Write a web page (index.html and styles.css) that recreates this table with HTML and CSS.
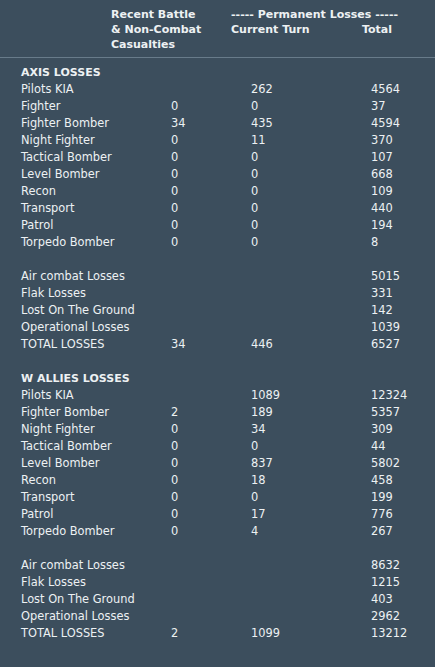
FILE: index.html
```html
<!DOCTYPE html>
<html>
<head>
<meta charset="utf-8">
<link rel="stylesheet" href="styles.css">
</head>
<body>
<div class="page">
  <div class="head">
    <div class="h-recent">Recent Battle<br>&amp; Non-Combat<br>Casualties</div>
    <div class="h-perm">
      <div class="h-perm-title">----- Permanent Losses -----</div>
      <div class="h-perm-sub"><span class="h-current">Current Turn</span><span>Total</span></div>
    </div>
  </div>
  <div class="rule"></div>
  <div class="table">
    <div class="row section"><span>AXIS LOSSES</span></div>
    <div class="row"><span>Pilots KIA</span><span></span><span>262</span><span>4564</span></div>
    <div class="row"><span>Fighter</span><span>0</span><span>0</span><span>37</span></div>
    <div class="row"><span>Fighter Bomber</span><span>34</span><span>435</span><span>4594</span></div>
    <div class="row"><span>Night Fighter</span><span>0</span><span>11</span><span>370</span></div>
    <div class="row"><span>Tactical Bomber</span><span>0</span><span>0</span><span>107</span></div>
    <div class="row"><span>Level Bomber</span><span>0</span><span>0</span><span>668</span></div>
    <div class="row"><span>Recon</span><span>0</span><span>0</span><span>109</span></div>
    <div class="row"><span>Transport</span><span>0</span><span>0</span><span>440</span></div>
    <div class="row"><span>Patrol</span><span>0</span><span>0</span><span>194</span></div>
    <div class="row"><span>Torpedo Bomber</span><span>0</span><span>0</span><span>8</span></div>
    <div class="row blank"></div>
    <div class="row"><span>Air combat Losses</span><span></span><span></span><span>5015</span></div>
    <div class="row"><span>Flak Losses</span><span></span><span></span><span>331</span></div>
    <div class="row"><span>Lost On The Ground</span><span></span><span></span><span>142</span></div>
    <div class="row"><span>Operational Losses</span><span></span><span></span><span>1039</span></div>
    <div class="row"><span>TOTAL LOSSES</span><span>34</span><span>446</span><span>6527</span></div>
    <div class="row blank"></div>
    <div class="row section"><span>W ALLIES LOSSES</span></div>
    <div class="row"><span>Pilots KIA</span><span></span><span>1089</span><span>12324</span></div>
    <div class="row"><span>Fighter Bomber</span><span>2</span><span>189</span><span>5357</span></div>
    <div class="row"><span>Night Fighter</span><span>0</span><span>34</span><span>309</span></div>
    <div class="row"><span>Tactical Bomber</span><span>0</span><span>0</span><span>44</span></div>
    <div class="row"><span>Level Bomber</span><span>0</span><span>837</span><span>5802</span></div>
    <div class="row"><span>Recon</span><span>0</span><span>18</span><span>458</span></div>
    <div class="row"><span>Transport</span><span>0</span><span>0</span><span>199</span></div>
    <div class="row"><span>Patrol</span><span>0</span><span>17</span><span>776</span></div>
    <div class="row"><span>Torpedo Bomber</span><span>0</span><span>4</span><span>267</span></div>
    <div class="row blank"></div>
    <div class="row"><span>Air combat Losses</span><span></span><span></span><span>8632</span></div>
    <div class="row"><span>Flak Losses</span><span></span><span></span><span>1215</span></div>
    <div class="row"><span>Lost On The Ground</span><span></span><span></span><span>403</span></div>
    <div class="row"><span>Operational Losses</span><span></span><span></span><span>2962</span></div>
    <div class="row"><span>TOTAL LOSSES</span><span>2</span><span>1099</span><span>13212</span></div>
  </div>
</div>
</body>
</html>
```

FILE: styles.css
```css
html, body {
  margin: 0;
  padding: 0;
}
body {
  background: #3c4e5d;
  color: #edf1f3;
  font-family: "DejaVu Sans", Verdana, sans-serif;
  font-size: 11px;
  width: 435px;
  height: 667px;
  overflow: hidden;
}
.page {
  padding-top: 7px;
}
.head {
  display: flex;
  font-weight: bold;
  line-height: 15px;
  padding-left: 111px;
}
.h-recent {
  width: 120px;
}
.h-perm-sub {
  display: flex;
}
.h-current {
  width: 131px;
}
.rule {
  height: 1px;
  background: #687b8a;
  margin-top: 5px;
}
.table {
  padding-top: 6px;
  padding-left: 21px;
  font-size: 11.4px;
}
.row {
  display: grid;
  grid-template-columns: 150px 80px 120px auto;
  height: 17px;
  line-height: 17px;
  white-space: nowrap;
}
.section {
  font-weight: bold;
  font-size: 11px;
}
```
